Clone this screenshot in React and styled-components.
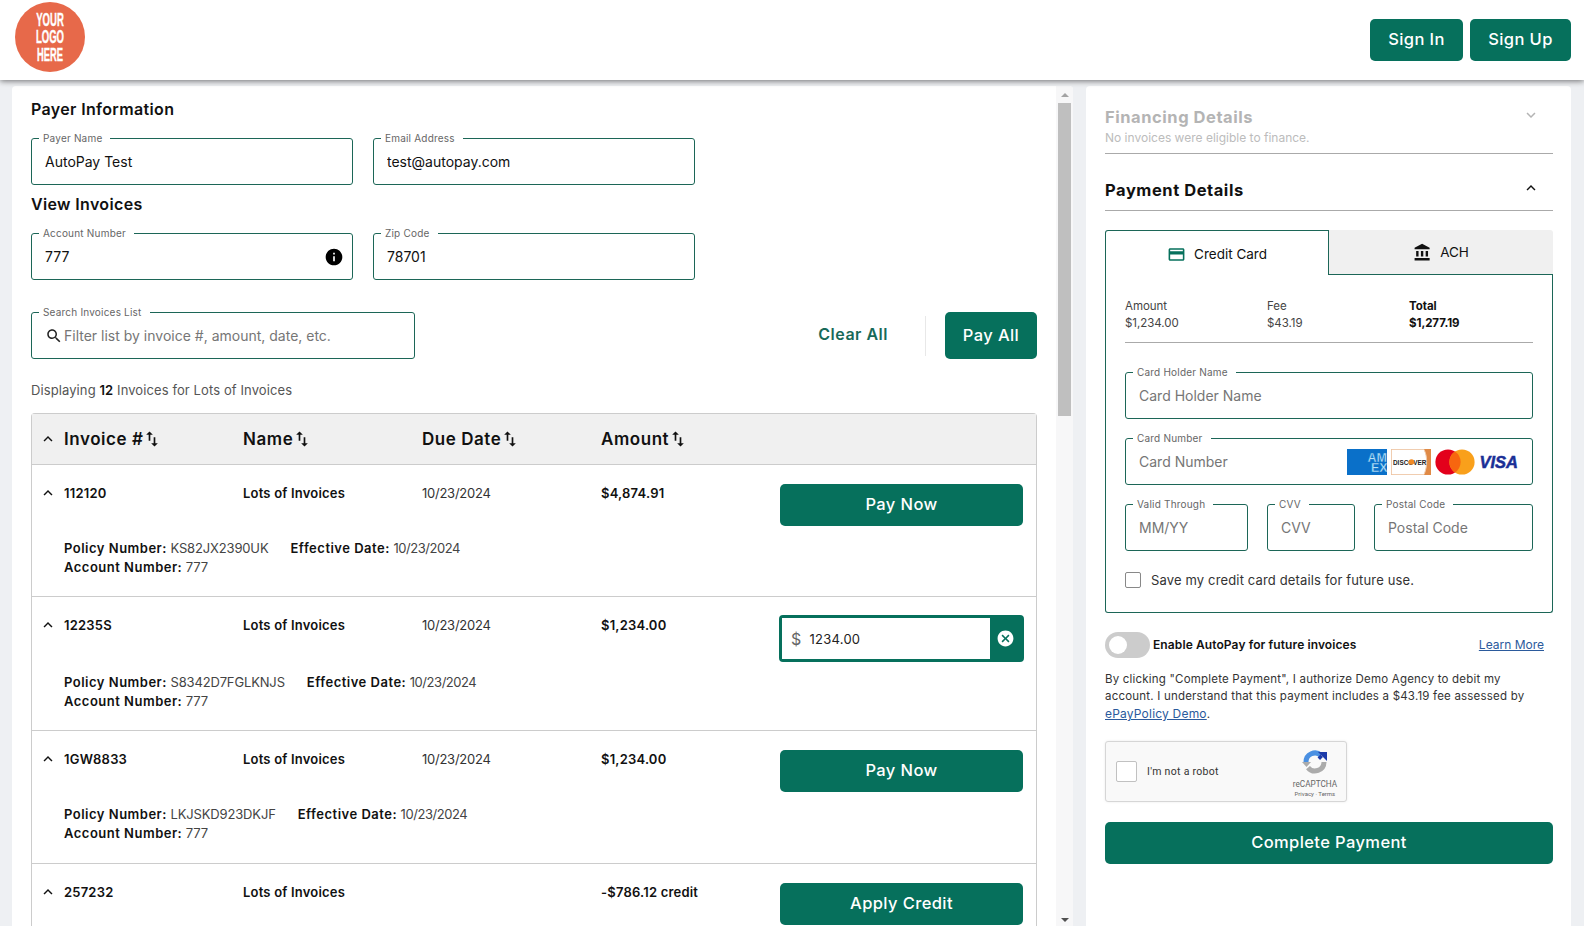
import React from "react";
import styled, { createGlobalStyle } from "styled-components";

const TEAL = "#06705c";
const LINE = "#1c6657";

const GlobalStyle = createGlobalStyle`
  html, body {
    margin: 0;
    height: 100%;
    overflow: hidden;
    font-family: Inter, "Noto Sans", sans-serif;
    color: #111;
  }
  * { box-sizing: border-box; }
  input { font-family: inherit; }
`;

const Page = styled.div`
  display: flex;
  flex-direction: column;
  height: 100vh;
  background: #eef0f3;
`;

const Header = styled.header`
  display: flex;
  align-items: center;
  justify-content: space-between;
  flex: none;
  height: 80px;
  padding: 0 13px 0 15px;
  background: #fff;
  box-shadow: 0 1px 6px rgba(0, 0, 0, 0.55);
  position: relative;
  z-index: 2;
`;

const LogoMark = styled.div`
  display: flex;
  margin-bottom: 6px;
`;

const HeaderButtons = styled.div`
  display: flex;
  gap: 7px;
`;

const Button = styled.button`
  display: flex;
  align-items: center;
  justify-content: center;
  height: ${(p) => p.$height || 42}px;
  width: ${(p) => (p.$width ? p.$width + "px" : "100%")};
  padding: 0 0 2px;
  border: 0;
  border-radius: 5px;
  background: ${TEAL};
  color: #fff;
  font-family: inherit;
  font-size: 16.5px;
  font-weight: 500;
  letter-spacing: 0.4px;
`;

const Main = styled.main`
  display: flex;
  flex: 1;
  min-height: 0;
  gap: 13px;
  padding: 6px 13px 0 12px;
`;

const LeftPane = styled.section`
  display: flex;
  flex: none;
  width: 1061px;
  background: #fff;
  border-radius: 4px 4px 0 0;
  overflow: hidden;
`;

const LeftContent = styled.div`
  flex: 1;
  min-width: 0;
  padding: 13px 19px 0;
  overflow: hidden;
`;

const ScrollTrack = styled.div`
  display: flex;
  flex-direction: column;
  align-items: center;
  flex: none;
  width: 17px;
  background: #f7f7f8;
`;

const ScrollArrow = styled.div`
  flex: none;
  width: 0;
  height: 0;
  margin: 7px 0 6px;
  border-left: 4px solid transparent;
  border-right: 4px solid transparent;
  border-bottom: 4px solid #a3a3a3;
`;

const ScrollThumb = styled.div`
  flex: none;
  width: 13px;
  height: 313px;
  background: #bfbfbf;
`;

const ScrollSpacer = styled.div`
  flex: 1;
`;

const ScrollArrowDown = styled(ScrollArrow)`
  margin: 0 0 4px;
  border-bottom: 0;
  border-top: 4px solid #505050;
`;

const SectionTitle = styled.h2`
  margin: ${(p) => p.$top || 0}px 0 19px;
  font-size: 16px;
  line-height: 20px;
  font-weight: 600;
  letter-spacing: 0.35px;
`;

const FieldRow = styled.div`
  display: flex;
  gap: ${(p) => p.$gap || 20}px;
`;

const FieldBox = styled.div`
  position: relative;
  display: flex;
  align-items: center;
  gap: 1px;
  flex: none;
  width: ${(p) => (p.$width ? p.$width + "px" : "100%")};
  height: 47px;
  padding: 0 13px;
  border: 1px solid ${LINE};
  border-radius: 3px;
  background: #fff;
`;

const FieldLabel = styled.label`
  position: absolute;
  top: -7px;
  left: 7px;
  padding: 0 8px 0 4px;
  background: #fff;
  color: #666;
  font-size: 10px;
  line-height: 12px;
  letter-spacing: 0.2px;
  white-space: nowrap;
`;

const FieldInput = styled.input`
  flex: 1;
  min-width: 0;
  padding: 0;
  border: 0;
  outline: 0;
  background: transparent;
  color: #111;
  font-size: 14px;
  letter-spacing: 0;
  &::placeholder {
    color: #767676;
    opacity: 1;
  }
`;

const InfoMark = styled.span`
  display: flex;
  margin-right: -5px;
`;

const Toolbar = styled.div`
  display: flex;
  align-items: center;
  margin-top: 32px;
`;

const ClearAll = styled.span`
  margin: 0 0 3px auto;
  color: #176a59;
  font-size: 16px;
  font-weight: 600;
  letter-spacing: 0.5px;
`;

const ToolbarDivider = styled.span`
  width: 1px;
  height: 40px;
  margin: 0 19px 0 37px;
  background: #e8e8e8;
`;

const Displaying = styled.p`
  margin: 21px 0 13px;
  color: #555;
  font-size: 13px;
  line-height: 20px;
  letter-spacing: 0.1px;
  b {
    color: #111;
    font-weight: 600;
  }
`;

const Table = styled.div`
  border: 1px solid #ccc;
  border-bottom: 0;
  border-radius: 4px 4px 0 0;
`;

const TableHead = styled.div`
  display: grid;
  grid-template-columns: 32px repeat(4, 179px);
  align-items: center;
  height: 51px;
  border-bottom: 1px solid #ccc;
  background: #f0f0f0;
`;

const HeadCell = styled.div`
  display: flex;
  align-items: center;
  font-size: 17px;
  font-weight: 600;
  letter-spacing: 0.55px;
  svg {
    margin-left: -1px;
  }
`;

const ChevronCell = styled.div`
  display: flex;
  justify-content: center;
`;

const Row = styled.div`
  padding: 19px 0 ${(p) => p.$tail}px;
  border-bottom: 1px solid #ccc;
`;

const RowMain = styled.div`
  display: grid;
  grid-template-columns: 32px 179px 179px 179px 1fr 243px;
  padding-right: 13px;
  font-size: 13px;
  line-height: 18px;
  letter-spacing: 0.25px;
`;

const Cell = styled.div`
  font-weight: ${(p) => p.$weight || 400};
  color: ${(p) => (p.$weight ? "#111" : "#333")};
  letter-spacing: ${(p) => (p.$weight ? "0.2px" : "-0.25px")};
`;

const AmountBox = styled.div`
  display: flex;
  align-items: stretch;
  width: 245px;
  height: 47px;
  margin: -1px -1px -4px;
  border: 3px solid ${TEAL};
  border-radius: 4px;
  background: ${TEAL};
`;

const AmountInner = styled.div`
  display: flex;
  align-items: center;
  gap: 8px;
  flex: 1;
  padding-left: 9px;
  background: #fff;
  color: #666;
  font-size: 16px;
`;

const AmountValue = styled.span`
  color: #222;
  font-size: 13px;
`;

const AmountClear = styled.div`
  display: flex;
  align-items: center;
  justify-content: center;
  flex: none;
  width: 31px;
`;

const Details = styled.div`
  margin-top: ${(p) => p.$gap}px;
  padding-left: 32px;
  font-size: 13px;
  line-height: 19px;
  color: #444;
  letter-spacing: -0.15px;
  b {
    color: #111;
    font-weight: 600;
    letter-spacing: 0.5px;
  }
`;

const DetailDate = styled.span`
  letter-spacing: -0.45px;
`;

const DetailLine = styled.div`
  display: flex;
  gap: 22px;
`;

const RightPane = styled.aside`
  flex: none;
  width: 485px;
  padding: 20px 18px 0 19px;
  background: #fff;
  border-radius: 4px 4px 0 0;
`;

const AccordionHead = styled.div`
  display: flex;
  justify-content: space-between;
  align-items: flex-start;
  padding-right: 13px;
`;

const AccordionTitle = styled.h3`
  margin: 0;
  color: ${(p) => (p.$muted ? "#b4b4b4" : "#111")};
  font-size: 16.5px;
  line-height: 22px;
  font-weight: 700;
  letter-spacing: 0.55px;
`;

const MutedNote = styled.p`
  margin: 2px 0 0;
  color: #bcbcbc;
  font-size: 12px;
  line-height: 16px;
  letter-spacing: 0;
`;

const Rule = styled.div`
  height: 1px;
  margin-top: ${(p) => p.$top}px;
  margin-bottom: ${(p) => p.$bottom}px;
  background: #aaa;
`;

const Tabs = styled.div`
  display: grid;
  grid-template-columns: 224px 1fr;
  height: 45px;
`;

const Tab = styled.div`
  display: flex;
  align-items: center;
  justify-content: center;
  gap: 8px;
  font-size: 13.5px;
  ${(p) =>
    p.$active
      ? `border: 1px solid ${LINE}; border-bottom: 0; border-radius: 3px 0 0 0; background: #fff; padding-top: 2px;`
      : `border-bottom: 1px solid ${LINE}; background: #f0f0f0; border-radius: 0 3px 0 0;`}
`;

const CardBody = styled.div`
  padding: 23px 19px 24px;
  border: 1px solid ${LINE};
  border-top: 0;
  border-radius: 0 0 3px 3px;
`;

const Summary = styled.div`
  display: grid;
  grid-template-columns: 142px 142px 1fr;
  padding-bottom: 10px;
  border-bottom: 1px solid #aaa;
  margin-bottom: 29px;
  font-size: 11.5px;
  line-height: 17px;
  color: #444;
  letter-spacing: -0.05px;
`;

const SummaryCol = styled.div`
  font-weight: ${(p) => (p.$bold ? 700 : 400)};
  color: ${(p) => (p.$bold ? "#111" : "#444")};
`;

const Stack = styled.div`
  display: flex;
  flex-direction: column;
  gap: 19px;
`;

const CardLogos = styled.div`
  display: flex;
  gap: 4px;
  flex: none;
`;

const CheckRow = styled.label`
  display: flex;
  align-items: center;
  gap: 10px;
  margin-top: 21px;
  color: #333;
  font-size: 13px;
  letter-spacing: 0.15px;
`;

const Checkbox = styled.span`
  flex: none;
  width: 16px;
  height: 16px;
  border: 1px solid #888;
  border-radius: 2px;
`;

const AutoPayRow = styled.div`
  display: flex;
  align-items: center;
  margin-top: 19px;
  padding-right: 9px;
`;

const Toggle = styled.span`
  position: relative;
  flex: none;
  width: 45px;
  height: 26px;
  margin-right: 3px;
  border-radius: 13px;
  background: #ccc;
  &::after {
    content: "";
    position: absolute;
    top: 4px;
    left: 4px;
    width: 18px;
    height: 18px;
    border-radius: 50%;
    background: #fff;
  }
`;

const AutoPayLabel = styled.span`
  padding-bottom: 2px;
  font-size: 12px;
  font-weight: 600;
  letter-spacing: 0.1px;
`;

const TextLink = styled.a`
  color: #2b5a9c;
  text-decoration: underline;
  font-size: 12px;
  padding-bottom: ${(p) => (p.$push ? "2px" : 0)};
  margin-left: ${(p) => (p.$push ? "auto" : 0)};
`;

const Legal = styled.p`
  margin: 13px 0 18px;
  color: #333;
  font-size: 11.5px;
  line-height: 17px;
  letter-spacing: 0.2px;
`;

const Captcha = styled.div`
  display: flex;
  align-items: center;
  width: 242px;
  height: 61px;
  margin-bottom: 20px;
  padding: 0 10px;
  border: 1px solid #d6d6d6;
  border-radius: 3px;
  background: #f9f9f9;
  box-shadow: 0 0 3px rgba(0, 0, 0, 0.08);
  font-family: Roboto, sans-serif;
`;

const CaptchaBox = styled.span`
  flex: none;
  width: 21px;
  height: 21px;
  border: 1px solid #c1c1c1;
  border-radius: 2px;
  background: #fff;
`;

const CaptchaText = styled.span`
  margin-left: 10px;
  color: #333;
  font-size: 10.5px;
  letter-spacing: 0.3px;
`;

const CaptchaBrand = styled.div`
  display: flex;
  flex-direction: column;
  align-items: center;
  margin: 0 -1px 0 auto;
  padding-top: 4px;
  color: #666;
`;

const BrandName = styled.span`
  margin-top: 4px;
  font-size: 8.2px;
  line-height: 11px;
`;

const BrandTerms = styled.span`
  font-size: 6px;
  line-height: 8px;
`;

/* icons */
const Icon = ({ d, size = 24, color = "currentColor" }) => (
  <svg width={size} height={size} viewBox="0 0 24 24" fill={color}>
    <path d={d} />
  </svg>
);

const PATHS = {
  up: "M12 8l-6 6 1.41 1.41L12 10.83l4.59 4.58L18 14z",
  down: "M16.59 8.59L12 13.17 7.41 8.59 6 10l6 6 6-6z",
  sort: "M16 17.01V10h-2v7.01h-3L15 21l4-3.99h-3zM9 3L5 6.99h3V14h2V6.99h3L9 3z",
  info: "M12 2C6.48 2 2 6.48 2 12s4.48 10 10 10 10-4.48 10-10S17.52 2 12 2zm1 15h-2v-6h2v6zm0-8h-2V7h2v2z",
  search:
    "M15.5 14h-.79l-.28-.27C15.41 12.59 16 11.11 16 9.5 16 5.91 13.09 3 9.5 3S3 5.91 3 9.5 5.91 16 9.5 16c1.61 0 3.09-.59 4.23-1.57l.27.28v.79l5 4.99L20.49 19l-4.99-5zm-6 0C7.01 14 5 11.99 5 9.5S7.01 5 9.5 5 14 7.01 14 9.5 11.99 14 9.5 14z",
  cancel:
    "M12 2C6.47 2 2 6.47 2 12s4.47 10 10 10 10-4.47 10-10S17.53 2 12 2zm5 13.59L15.59 17 12 13.41 8.41 17 7 15.59 10.59 12 7 8.41 8.41 7 12 10.59 15.59 7 17 8.41 13.41 12 17 15.59z",
  card: "M20 4H4c-1.11 0-1.99.89-1.99 2L2 18c0 1.11.89 2 2 2h16c1.11 0 2-.89 2-2V6c0-1.11-.89-2-2-2zm0 14H4v-6h16v6zm0-10H4V6h16v2z",
  bank: "M4 10v7h3v-7H4zm6 0v7h3v-7h-3zM2 22h19v-3H2v3zm14-12v7h3v-7h-3zm-4.5-9L2 6v2h19V6l-9.5-5z",
};

const Logo = () => (
  <svg width="70" height="70" viewBox="0 0 70 70">
    <circle cx="35" cy="35" r="35" fill="#e7694a" />
    <g fill="#fff" stroke="#fff" strokeWidth="0.4" fontFamily="Liberation Sans" fontWeight="700" fontSize="18" textAnchor="middle">
      <text transform="translate(35 24) scale(0.53 1)">YOUR</text>
      <text transform="translate(35 41) scale(0.53 1)">LOGO</text>
      <text transform="translate(35 59) scale(0.52 1)">HERE</text>
    </g>
  </svg>
);

const Amex = () => (
  <svg width="40" height="26" viewBox="0 0 40 26">
    <rect width="40" height="26" fill="#0a70c9" />
    <text fill="#b5e2f7" stroke="#0a70c9" strokeWidth="0.4" fontFamily="Liberation Sans" fontWeight="700" fontSize="12.5">
      <tspan x="20.5" y="13">AM</tspan>
      <tspan x="24" y="23">EX</tspan>
    </text>
  </svg>
);

const Discover = () => (
  <svg width="40" height="26" viewBox="0 0 40 26">
    <rect width="40" height="26" fill="#e08a46" />
    <path d="M0.5 0.5H33C37 8 36 19 33 25.5H0.5z" fill="#fff" stroke="#f0cdb0" />
    <text transform="translate(2 16) scale(0.82 1)" fontFamily="Liberation Sans" fontWeight="700" fontSize="7.8" fill="#222">
      DISCOVER
    </text>
    <circle cx="20.5" cy="13" r="2.8" fill="#f08a24" />
  </svg>
);

const MasterCard = () => (
  <svg width="40" height="26" viewBox="0 0 40 26">
    <circle cx="13" cy="13" r="12.6" fill="#e3001b" />
    <circle cx="27" cy="13" r="12.6" fill="#f9a01b" />
    <path d="M20 2.500a12.600 12.600 0 0 1 0 21a12.600 12.600 0 0 1 0-21z" fill="#f7660f" />
  </svg>
);

const Visa = () => (
  <svg width="40" height="26" viewBox="0 0 40 26">
    <text x="0.5" y="19" fontFamily="Liberation Sans" fontWeight="700" fontStyle="italic" fontSize="16.5" stroke="#1a2f96" strokeWidth="0.5" fill="#1a2f96">
      VISA
    </text>
  </svg>
);

const RecaptchaLogo = () => (
  <svg width="26" height="26" viewBox="0 0 26 26" fill="none">
    <path d="M4 13a9 9 0 0 1 15-6.700" stroke="#4a90e2" strokeWidth="5" />
    <path d="M16 3l9 0v9l-9-9z" fill="#1c3aa9" />
    <path d="M17 7l2.500 2.500" stroke="#1c3aa9" strokeWidth="4" />
    <path d="M22 13a9 9 0 0 1-16 5.600" stroke="#ababab" strokeWidth="5" />
    <path d="M0 13h9l-4.500 5z" fill="#ababab" />
  </svg>
);

const Field = ({ label, value, placeholder, width, children, before }) => (
  <FieldBox $width={width}>
    <FieldLabel>{label}</FieldLabel>
    {before}
    <FieldInput readOnly defaultValue={value} placeholder={placeholder} />
    {children}
  </FieldBox>
);

const HeadColumn = ({ children }) => (
  <HeadCell>
    {children}
    <Icon d={PATHS.sort} size={20} color="#111" />
  </HeadCell>
);

const PayAmount = () => (
  <AmountBox>
    <AmountInner>
      $<AmountValue>1234.00</AmountValue>
    </AmountInner>
    <AmountClear>
      <Icon d={PATHS.cancel} size={19} color="#fff" />
    </AmountClear>
  </AmountBox>
);

const INVOICES = [
  { id: "112120", amount: "$4,874.91", policy: "KS82JX2390UK", action: "Pay Now", gap: 13, tail: 19 },
  { id: "12235S", amount: "$1,234.00", policy: "S8342D7FGLKNJS", editing: true, gap: 15, tail: 19 },
  { id: "1GW8833", amount: "$1,234.00", policy: "LKJSKD923DKJF", action: "Pay Now", gap: 13, tail: 20 },
  { id: "257232", amount: "-$786.12 credit", policy: "", action: "Apply Credit", tail: 18 },
];

const InvoiceRow = ({ invoice }) => (
  <Row $tail={invoice.tail}>
    <RowMain>
      <ChevronCell>
        <Icon d={PATHS.up} size={18} color="#111" />
      </ChevronCell>
      <Cell $weight={600}>{invoice.id}</Cell>
      <Cell $weight={600}>Lots of Invoices</Cell>
      <Cell>{invoice.policy ? "10/23/2024" : ""}</Cell>
      <Cell $weight={600}>{invoice.amount}</Cell>
      <div>
        {invoice.editing ? <PayAmount /> : <Button>{invoice.action}</Button>}
      </div>
    </RowMain>
    {invoice.policy && (
      <Details $gap={invoice.gap}>
        <DetailLine>
          <span>
            <b>Policy Number:</b> {invoice.policy}
          </span>
          <span>
            <b>Effective Date:</b> <DetailDate>10/23/2024</DetailDate>
          </span>
        </DetailLine>
        <div>
          <b>Account Number:</b> 777
        </div>
      </Details>
    )}
  </Row>
);

export default function App() {
  return (
    <Page>
      <GlobalStyle />
      <Header>
        <LogoMark>
          <Logo />
        </LogoMark>
        <HeaderButtons>
          <Button $width={93}>Sign In</Button>
          <Button $width={101}>Sign Up</Button>
        </HeaderButtons>
      </Header>
      <Main>
        <LeftPane>
          <LeftContent>
            <SectionTitle>Payer Information</SectionTitle>
            <FieldRow>
              <Field label="Payer Name" value="AutoPay Test" width={322} />
              <Field label="Email Address" value="test@autopay.com" width={322} />
            </FieldRow>
            <SectionTitle $top={9}>View Invoices</SectionTitle>
            <FieldRow>
              <Field label="Account Number" value="777" width={322}>
                <InfoMark>
                  <Icon d={PATHS.info} size={20} color="#000" />
                </InfoMark>
              </Field>
              <Field label="Zip Code" value="78701" width={322} />
            </FieldRow>
            <Toolbar>
              <Field
                label="Search Invoices List"
                placeholder="Filter list by invoice #, amount, date, etc."
                width={384}
                before={<Icon d={PATHS.search} size={18} color="#222" />}
              />
              <ClearAll>Clear All</ClearAll>
              <ToolbarDivider />
              <Button $width={92} $height={47}>Pay All</Button>
            </Toolbar>
            <Displaying>
              Displaying <b>12</b> Invoices for Lots of Invoices
            </Displaying>
            <Table>
              <TableHead>
                <ChevronCell>
                  <Icon d={PATHS.up} size={18} color="#111" />
                </ChevronCell>
                <HeadColumn>Invoice #</HeadColumn>
                <HeadColumn>Name</HeadColumn>
                <HeadColumn>Due Date</HeadColumn>
                <HeadColumn>Amount</HeadColumn>
              </TableHead>
              {INVOICES.map((invoice) => (
                <InvoiceRow key={invoice.id} invoice={invoice} />
              ))}
            </Table>
          </LeftContent>
          <ScrollTrack>
            <ScrollArrow />
            <ScrollThumb />
            <ScrollSpacer />
            <ScrollArrowDown />
          </ScrollTrack>
        </LeftPane>
        <RightPane>
          <AccordionHead>
            <AccordionTitle $muted>Financing Details</AccordionTitle>
            <Icon d={PATHS.down} size={18} color="#b4b4b4" />
          </AccordionHead>
          <MutedNote>No invoices were eligible to finance.</MutedNote>
          <Rule $top={7} $bottom={25} />
          <AccordionHead>
            <AccordionTitle>Payment Details</AccordionTitle>
            <Icon d={PATHS.up} size={18} color="#111" />
          </AccordionHead>
          <Rule $top={9} $bottom={19} />
          <Tabs>
            <Tab $active>
              <Icon d={PATHS.card} size={19} color={TEAL} />
              Credit Card
            </Tab>
            <Tab>
              <Icon d={PATHS.bank} size={19} color="#111" />
              ACH
            </Tab>
          </Tabs>
          <CardBody>
            <Summary>
              <SummaryCol>Amount<br />$1,234.00</SummaryCol>
              <SummaryCol>Fee<br />$43.19</SummaryCol>
              <SummaryCol $bold>Total<br />$1,277.19</SummaryCol>
            </Summary>
            <Stack>
              <Field label="Card Holder Name" placeholder="Card Holder Name" />
              <Field label="Card Number" placeholder="Card Number">
                <CardLogos>
                  <Amex />
                  <Discover />
                  <MasterCard />
                  <Visa />
                </CardLogos>
              </Field>
              <FieldRow $gap={19}>
                <Field label="Valid Through" placeholder="MM/YY" width={123} />
                <Field label="CVV" placeholder="CVV" width={88} />
                <Field label="Postal Code" placeholder="Postal Code" width={159} />
              </FieldRow>
            </Stack>
            <CheckRow>
              <Checkbox />
              Save my credit card details for future use.
            </CheckRow>
          </CardBody>
          <AutoPayRow>
            <Toggle />
            <AutoPayLabel>Enable AutoPay for future invoices</AutoPayLabel>
            <TextLink $push>Learn More</TextLink>
          </AutoPayRow>
          <Legal>
            By clicking "Complete Payment", I authorize Demo Agency to debit my
            <br />
            account. I understand that this payment includes a $43.19 fee assessed by
            <br />
            <TextLink>ePayPolicy Demo</TextLink>.
          </Legal>
          <Captcha>
            <CaptchaBox />
            <CaptchaText>I'm not a robot</CaptchaText>
            <CaptchaBrand>
              <RecaptchaLogo />
              <BrandName>reCAPTCHA</BrandName>
              <BrandTerms>Privacy · Terms</BrandTerms>
            </CaptchaBrand>
          </Captcha>
          <Button>Complete Payment</Button>
        </RightPane>
      </Main>
    </Page>
  );
}
